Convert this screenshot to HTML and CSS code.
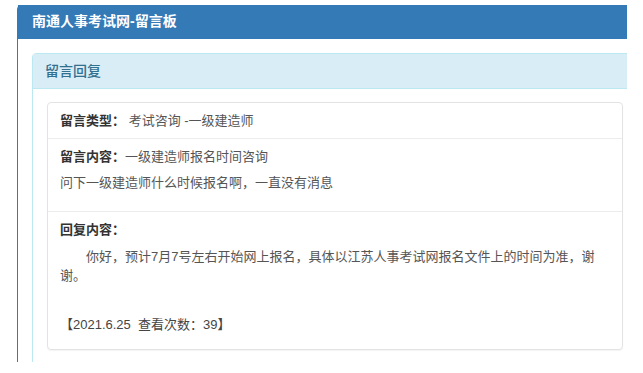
FILE: index.html
```html
<!DOCTYPE html>
<html lang="zh-CN">
<head>
  <meta charset="UTF-8">
  <meta name="viewport" content="width=device-width, initial-scale=1.0">
  <title>南通人事考试网-留言板</title>
  <link rel="stylesheet" href="styles.css">
</head>
<body>
  <div class="frame">
    <div class="panel">
      <div class="panel-title">南通人事考试网-留言板</div>
      <div class="panel-body">
        <div class="subpanel">
          <div class="subpanel-title">留言回复</div>
          <div class="subpanel-body">
            <ul class="card">
              <li class="row">
                <b>留言类型：</b> 考试咨询 -一级建造师
              </li>
              <li class="row">
                <b>留言内容：</b>一级建造师报名时间咨询
                <p class="msg">问下一级建造师什么时候报名啊，一直没有消息</p>
              </li>
              <li class="row">
                <b>回复内容：</b>
                <p class="reply">你好，预计7月7号左右开始网上报名，具体以江苏人事考试网报名文件上的时间为准，谢谢。</p>
                <p class="date">【2021.6.25&nbsp; 查看次数：39】</p>
              </li>
            </ul>
          </div>
        </div>
      </div>
    </div>
  </div>
</body>
</html>
```

FILE: styles.css
```css
body {
  margin: 0;
  background-color: #fff;
  font-family: "Liberation Sans", "Noto Sans CJK SC", sans-serif;
  font-size: 13px;
  color: #555;
}

.frame {
  width: 627px;
  height: 362px;
  overflow: hidden;
  padding-top: 5px;
  padding-left: 17px;
  box-sizing: border-box;
}

.panel {
  width: 634px;
  border: 1px solid #337ab7;
  border-radius: 4px 4px 0 0;
}

.panel-title {
  background-color: #337ab7;
  color: #fff;
  font-size: 14px;
  font-weight: bold;
  line-height: 19px;
  padding: 7px 14px 8px;
  margin-top: -1px;
}

.panel-body {
  padding: 14px;
}

.subpanel {
  border: 1px solid #bce8f1;
  border-radius: 4px 4px 0 0;
}

.subpanel-title {
  background-color: #d9edf7;
  color: #31708f;
  font-size: 14px;
  font-weight: 500;
  line-height: 18px;
  padding: 8px 12px;
  border-bottom: 1px solid #bce8f1;
}

.subpanel-body {
  padding: 13px 14px 14px;
}

.card {
  list-style: none;
  margin: 0;
  padding: 0;
  border: 1px solid #e3e3e3;
  border-radius: 4px;
  box-shadow: 0 1px 1px rgba(0, 0, 0, 0.05);
}

.row {
  padding: 8px 12px;
  line-height: 19px;
  border-top: 1px solid #ececec;
}

.row:first-child {
  border-top: none;
}

.row b {
  color: #333;
}

.msg {
  margin: 7px 0 11px;
}

.reply {
  margin: 8px 0 0;
  text-indent: 2em;
}

.date {
  margin: 30px 0 7px;
  color: #444;
}
```
